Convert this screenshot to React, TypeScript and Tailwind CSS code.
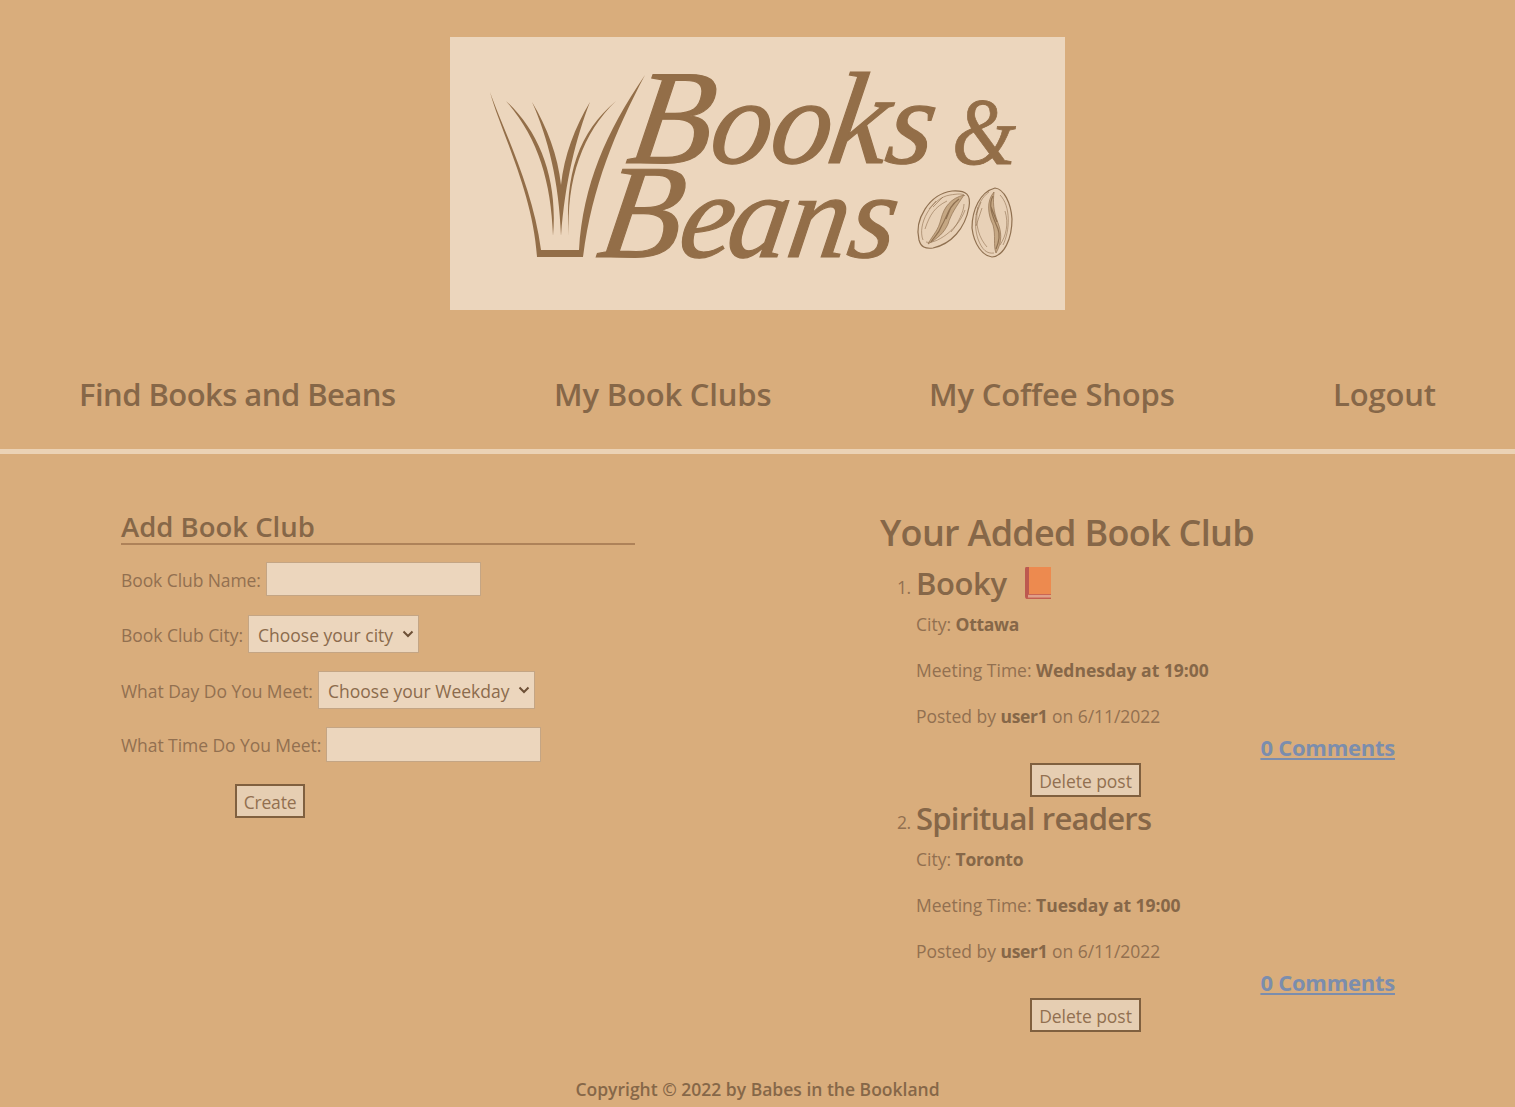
import React from "react";

const navItems = [
  { label: "Find Books and Beans", style: "w-[317px] tracking-[-0.55px]" },
  { label: "My Book Clubs", style: "w-[217px] tracking-[-0.18px]" },
  { label: "My Coffee Shops", style: "w-[246px] tracking-[-0.16px]" },
  { label: "Logout", style: "w-[103px] tracking-[-0.15px]" },
];

const clubs = [
  { name: "Booky", book: true, city: "Ottawa", time: "Wednesday at 19:00" },
  { name: "Spiritual readers", book: false, city: "Toronto", time: "Tuesday at 19:00" },
];

function Logo() {
  return (
    <svg viewBox="450 37 615 273" className="h-[273px] w-[615px] bg-[#ecd6bd]" role="img" aria-label="Books & Beans">
      <g fill="#936e48">
        <path d="M490 92 C502 127 533 187 541 250 L579 250 C583 185 606 132 645 75 C615 132 592 187 583 257 L537 257 C533 192 500 130 490 92 Z" />
        <path d="M506 101 C540 132 558 180 553 236 C551 181 538 138 506 101 Z" />
        <path d="M532 102 C547 127 558 156 561 185 C564 156 575 127 590 102 C576 138 565 181 561 236 C559 181 548 138 532 102 Z" />
        <path d="M616 101 C583 132 566 180 569 236 C564 175 579 132 616 101 Z" />
      </g>
      <g fill="#936e48" stroke="#936e48" fontFamily="'Liberation Serif', serif" fontStyle="italic">
        <text y="0" strokeWidth="1.2" transform="translate(625 163) skewX(-9)">
          <tspan x="0" fontSize="135">B</tspan>
          <tspan x="82 142" fontSize="121">oo</tspan>
          <tspan x="200" fontSize="131">k</tspan>
          <tspan x="258" fontSize="121">s</tspan>
        </text>
        <text y="0" strokeWidth="1.2" transform="translate(595 257) skewX(-9)">
          <tspan x="0" fontSize="134">B</tspan>
          <tspan x="81 129 189 250" fontSize="121">eans</tspan>
        </text>
        <text x="952" y="164" fontSize="96" textLength="64" lengthAdjust="spacingAndGlyphs" strokeWidth="0.8">&amp;</text>
      </g>
      <g fill="none" stroke="#907151" strokeWidth="1.2">
        <g>
          <path d="M919 240 C914 220 929 194 952 191 C967 190 971 195 969 207 C965 229 951 244 933 248 C925 249 921 247 919 240 Z" fill="#e8d1b7" />
          <path d="M923 240 C917 225 931 198 950 195 C957 194 963 193 965 196 M926 242 C935 245 958 230 965 210 M925 229 C930 214 935 207 947 201 M951 232 C958 224 964 211 964 204 M929 209 L936 201 M933 207 L943 197" strokeWidth="0.6" />
          <path d="M964 195 C951 198 944 207 941 219 C938 231 934 233 928 244 C938 238 944 233 948 224 C951 214 956 207 964 195 Z" fill="#c5a783" strokeWidth="0.7" />
          <path d="M959 199 C948 207 947 217 942 225 C938 235 935 236 931 242 M951 207 L946 219" strokeWidth="1.2" />
        </g>
        <g>
          <path d="M995 188 C980 192 972 210 972 228 C974 245 983 256 992 257 C1004 256 1012 239 1012 219 C1011 203 1004 189 995 188 Z" fill="#e8d1b7" />
          <path d="M989 192 C975 202 973 224 978 239 C982 250 987 254 994 253 M1000 195 C1011 206 1010 231 1003 245 M978 207 C974 226 980 239 987 247 M1005 211 C1009 224 1006 236 1000 245 M976 215 L981 202 M976 226 L982 208" strokeWidth="0.6" />
          <path d="M994 192 C986 201 988 215 993 225 C996 236 993 245 996 253 C1003 241 1001 231 998 223 C993 210 993 202 994 192 Z" fill="#c5a783" strokeWidth="0.7" />
          <path d="M993 196 C987 206 994 219 998 229 C1001 237 998 244 996 249 M991 207 L997 222" strokeWidth="1.2" />
        </g>
      </g>
    </svg>
  );
}

function BookIcon() {
  return (
    <svg viewBox="0 0 26 32" className="ml-[18px] h-8 w-[26px]">
      <path d="M1 0H26V26H4V31H26V32H2Q0 32 0 29V2Q0 0 1 0Z" fill="#bd594f" />
      <path d="M4 0H26V27H4Z" fill="#ed8a4f" />
      <path d="M3 28H25V31H3Z" fill="#dfa08a" />
      <path d="M3 27.5H26M2 31H26" stroke="#ca6653" strokeWidth="1" />
    </svg>
  );
}

function SelectBox({ children, width }: { children: React.ReactNode; width: string }) {
  return (
    <button className={"flex h-[38px] items-center justify-between border border-[#c4a584] bg-[#ecd6bd] pl-[9px] pr-1 text-[#8b6b4c] " + width}>
      <span className="pt-px">{children}</span>
      <svg viewBox="0 0 12 8" className="h-2 w-3 fill-none stroke-[#6d5036] stroke-2"><path d="M1.5 1.5L6 6L10.5 1.5" /></svg>
    </button>
  );
}

export default function App() {
  return (
    <div className="h-[1107px] overflow-hidden bg-[#d9ad7c] font-['Open_Sans','Noto_Sans',sans-serif] text-[17.5px] leading-6 whitespace-nowrap text-[#927050]">
      <header className="h-[454px] border-b-[5px] border-[#ebd2b5] pt-[37px]">
        <div className="flex justify-center"><Logo /></div>
        <nav className="mt-[63px] flex justify-between px-[79px] text-[31px] leading-[42px] font-semibold text-[#866748]">
          {navItems.map((n) => <a key={n.label} className={n.style}>{n.label}</a>)}
        </nav>
      </header>
      <main className="flex h-[623px] justify-between pr-[120px] pl-[121px]">
        <section className="w-[514px] pt-[54px]">
          <h2 className="h-[37px] border-b-2 border-[#ae8259] text-[27.5px] leading-[38px] font-semibold text-[#866748]">Add Book Club</h2>
          <div className="mt-[17px] flex h-[34px] items-center gap-[5px]">
            <label className="w-[140px] pt-0.5 tracking-[-0.08px]">Book Club Name:</label>
            <input className="h-[34px] w-[215px] border border-[#c4a584] bg-[#ecd6bd]" />
          </div>
          <div className="mt-[19px] flex items-center gap-[5px]">
            <label className="w-[122px] pt-px tracking-[-0.04px]">Book Club City:</label>
            <SelectBox width="w-[171px]">Choose your city</SelectBox>
          </div>
          <div className="mt-[18px] flex items-center gap-[5px]">
            <label className="w-[192px] pt-px tracking-[-0.04px]">What Day Do You Meet:</label>
            <SelectBox width="w-[217px]">Choose your Weekday</SelectBox>
          </div>
          <div className="mt-[18px] flex h-[35px] items-center gap-[5px]">
            <label className="w-[200px] tracking-[-0.06px]">What Time Do You Meet:</label>
            <input className="h-[35px] w-[215px] border border-[#c4a584] bg-[#ecd6bd]" />
          </div>
          <button className="mt-[22px] ml-[114px] flex h-[34px] w-[70px] items-center justify-center border-2 border-[#80603f] bg-[#e6ceb2] pt-0.5 tracking-[-0.2px]">Create</button>
        </section>
        <section className="w-[515px] pt-[54px]">
          <h1 className="h-[50px] text-[36px] leading-[50px] font-semibold tracking-[-0.7px] text-[#866748]">Your Added Book Club</h1>
          <ol>
            {clubs.map((c, i) => (
              <li key={c.name} className="flex h-[235px]">
                <span className="w-9 pt-[17px] pl-[17px] tracking-[-0.5px]">{i + 1}.</span>
                <div className="flex flex-1 flex-col">
                  <h3 className={"mt-[4px] flex h-[42px] shrink-0 items-center text-[31px] font-semibold text-[#866748] " + (c.book ? "tracking-[-0.4px]" : "tracking-[-0.78px]")}>{c.name}{c.book && <BookIcon />}</h3>
                  <p className="mt-[8px]">City: <b className="tracking-[-0.3px] text-[#866748]">{c.city}</b></p>
                  <p className="mt-[22px]">Meeting Time: <b className="text-[#866748]">{c.time}</b></p>
                  <p className="mt-[22px] tracking-[-0.03px]">Posted by <b className="tracking-[-0.3px] text-[#866748]">user1</b> on 6/11/2022</p>
                  <a className="mt-1 self-end text-[22px] leading-[30px] font-bold tracking-[-0.25px] text-[#7b8dad] underline decoration-2 underline-offset-2">0 Comments</a>
                  <button className="mt-px ml-[114px] flex h-[34px] w-[111px] shrink-0 items-center justify-center border-2 border-[#80603f] bg-[#e6ceb2] pt-0.5 tracking-[-0.05px]">Delete post</button>
                </div>
              </li>
            ))}
          </ol>
        </section>
      </main>
      <footer className="text-center font-semibold text-[#866748]">Copyright © 2022 by Babes in the Bookland</footer>
    </div>
  );
}
